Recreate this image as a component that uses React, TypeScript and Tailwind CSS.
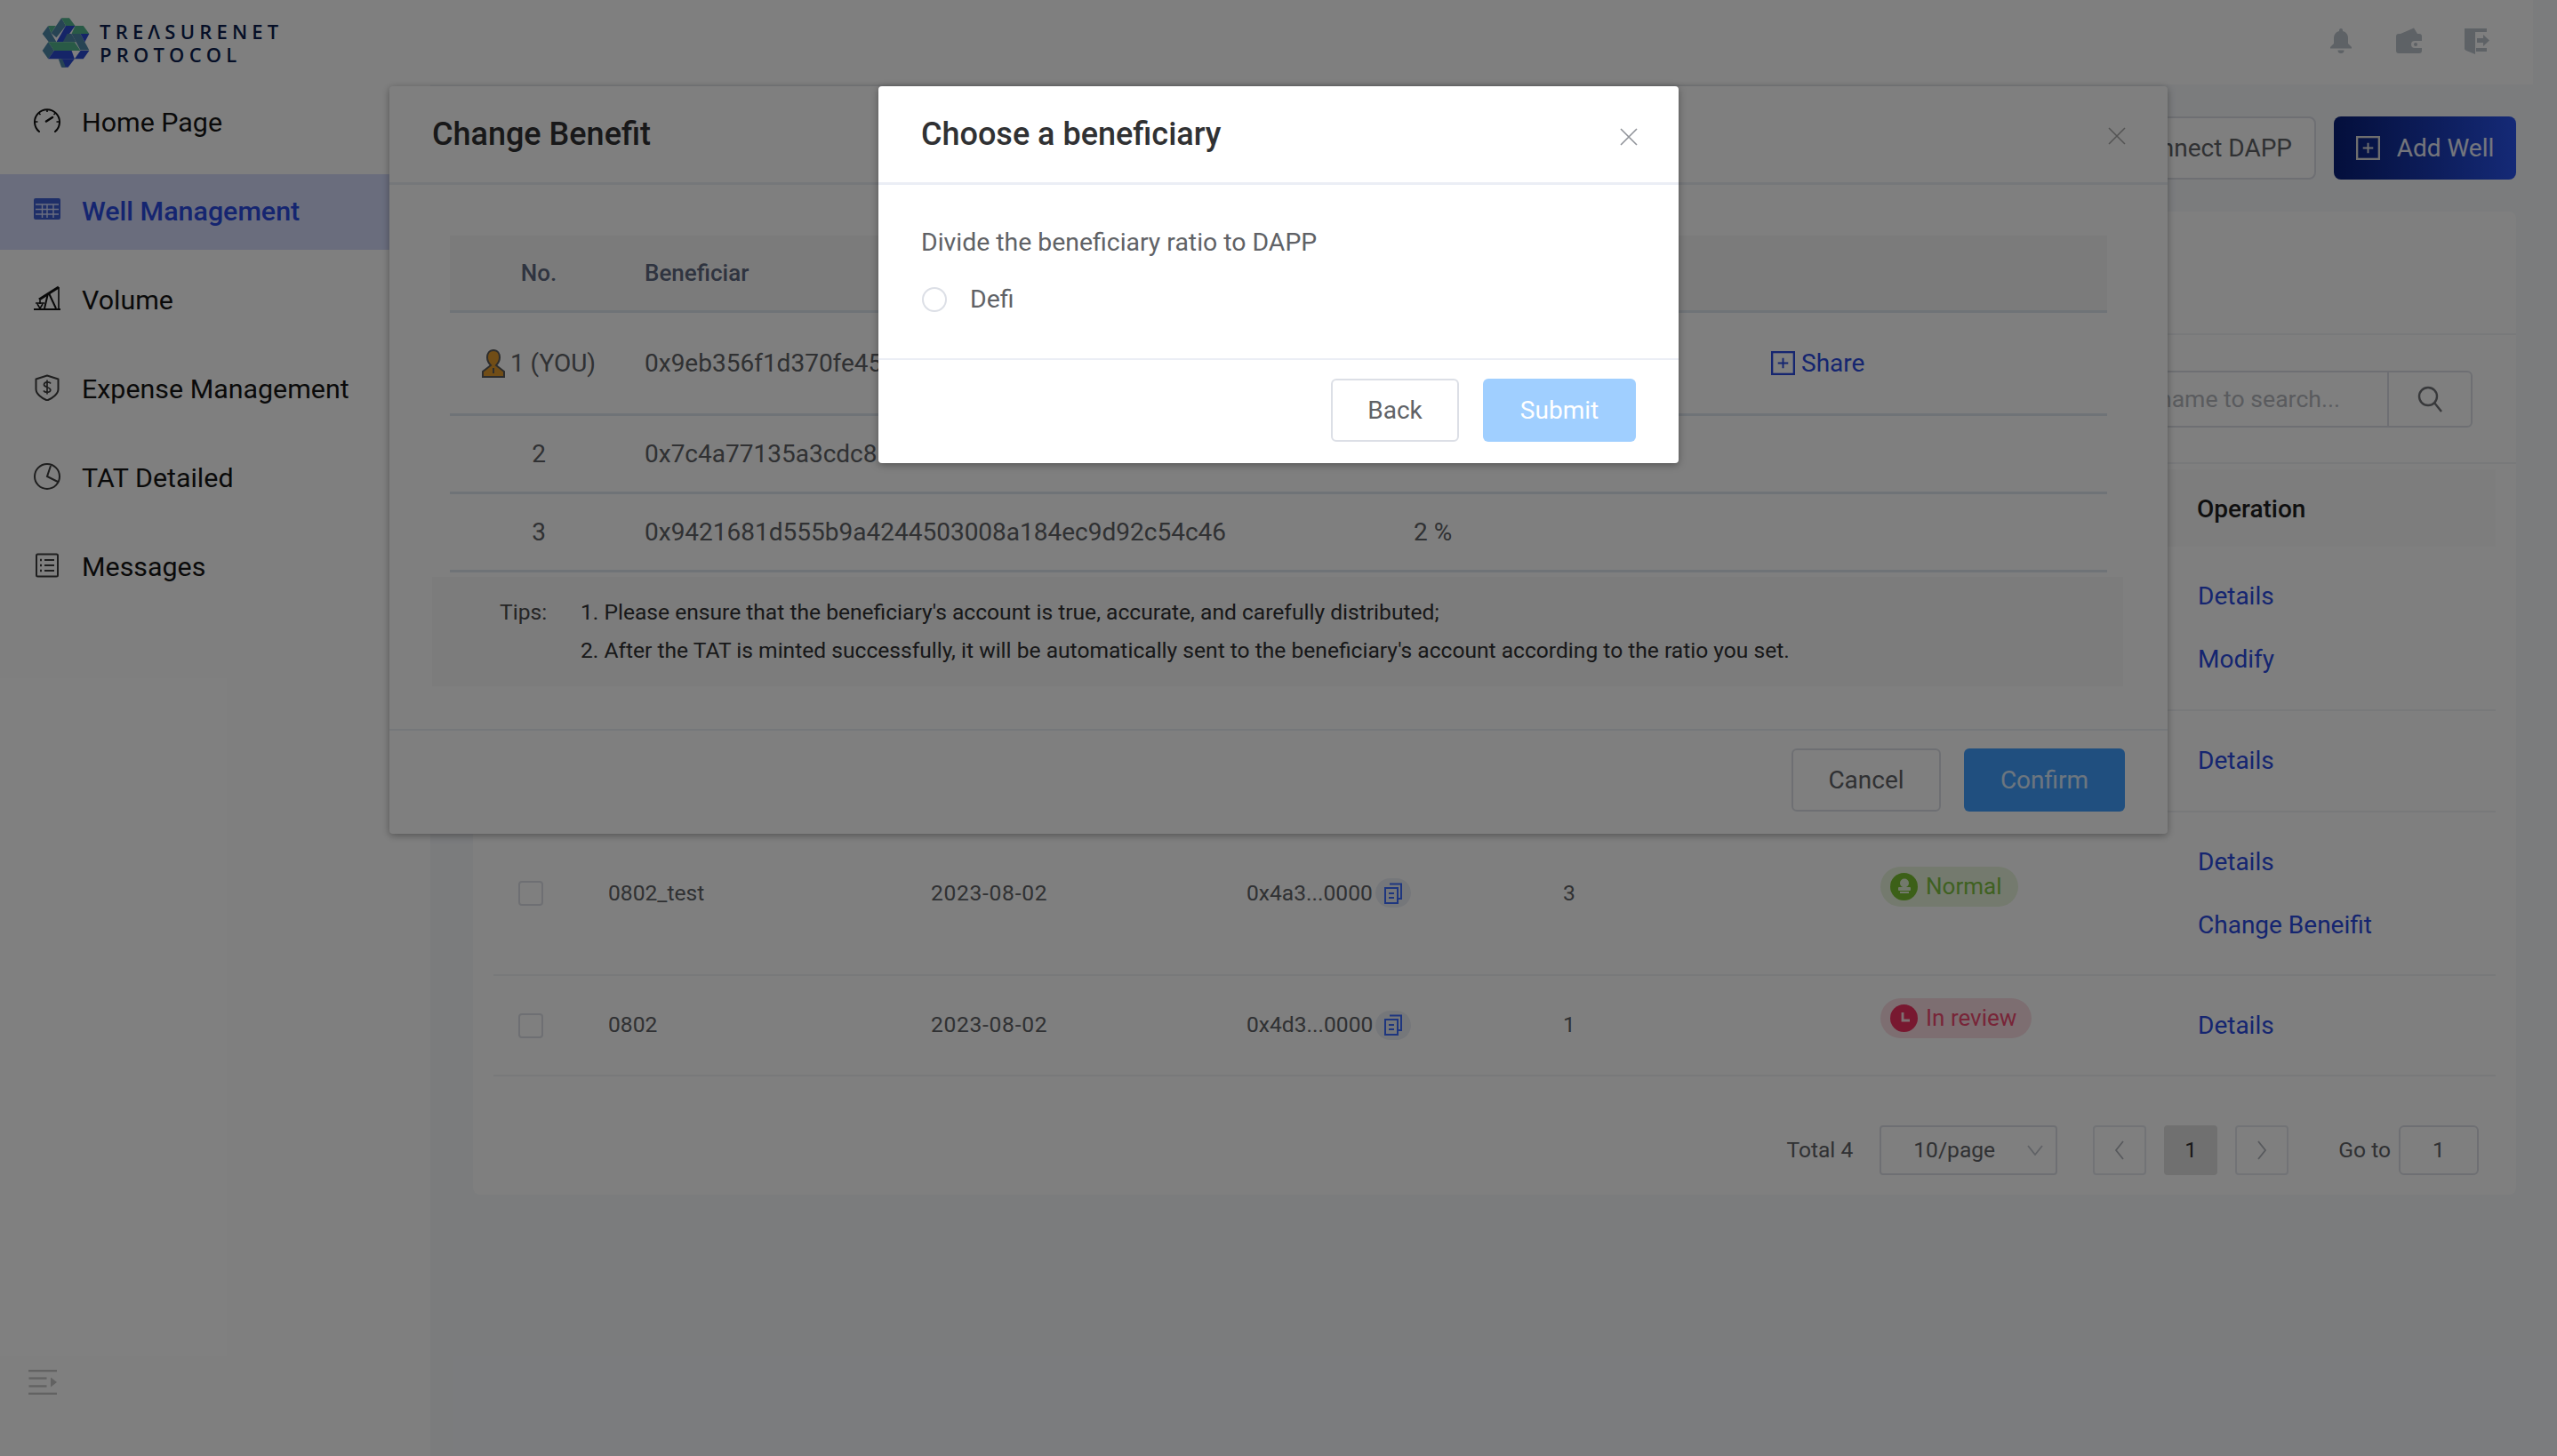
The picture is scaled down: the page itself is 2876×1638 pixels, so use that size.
import React from "react";

const Logo = () => (
  <svg viewBox="15 15 170 175" className="w-[56px] h-[58px] shrink-0">
    <polygon points="40,45 20,72 42,100 68,100 50,70" fill="#4f88a8" />
    <polygon points="40,45 66,45 50,70" fill="#52b58c" />
    <polygon points="85,18 100,45 68,85 50,70" fill="#4f88a8" />
    <polygon points="85,18 112,18 132,45 100,45" fill="#52b58c" />
    <polygon points="100,45 132,45 92,100 68,100" fill="#2b4bd0" />
    <polygon points="132,45 160,45 180,72 120,72" fill="#52b58c" />
    <polygon points="120,72 150,72 180,128 150,128" fill="#4f88a8" />
    <polygon points="105,72 120,72 135,100 90,100" fill="#4f88a8" />
    <polygon points="150,72 180,72 165,100" fill="#2b4bd0" />
    <polygon points="40,100 130,100 150,130 60,130" fill="#52b58c" />
    <polygon points="40,100 60,130 40,158 20,130" fill="#4f88a8" />
    <polygon points="60,130 120,130 130,158 40,158" fill="#2b4bd0" />
    <polygon points="85,158 130,158 108,187 88,187" fill="#2b4bd0" />
    <polygon points="75,158 88,158 100,187 85,187" fill="#4f88a8" />
    <polygon points="150,130 180,130 160,158 130,158" fill="#2b4bd0" />
  </svg>
);

const GaugeIcon = () => (
  <svg viewBox="0 0 30 30" className="w-[30px] h-[30px]" fill="none" stroke="#111" strokeWidth="2">
    <path d="M6 27 A14 14 0 1 1 24 27" strokeLinecap="round" />
    <path d="M15 2v3M5.500 6l2 2M24.500 6l-2 2M1.500 16h3M25.500 16h3" strokeWidth="1.6" />
    <path d="M14 15.500 L21 11" strokeWidth="2.6" strokeLinecap="round" />
  </svg>
);
const TableIcon = () => (
  <svg viewBox="0 0 30 30" className="w-[30px] h-[30px]">
    <rect x="0" y="2" width="30" height="24" rx="2" fill="#3f5fd0" />
    <path d="M2 9h26M2 14.500h26M2 20h26M9.500 9v15M15 9v15M22 9v15" stroke="#d4dcff" strokeWidth="1.4" />
  </svg>
);
const PumpIcon = () => (
  <svg viewBox="0 0 30 30" className="w-[30px] h-[30px]" fill="none" stroke="#111">
    <path d="M0 27h30" strokeWidth="2" />
    <path d="M6 16 L28 2" strokeWidth="3" />
    <path d="M16 9 L12 26M17 9 L25 26" strokeWidth="2" />
    <path d="M28 2 L28 26" strokeWidth="1.6" />
    <path d="M2 20h10M4 21l3 5 3-5M7 17v4" strokeWidth="1.6" />
  </svg>
);
const ShieldIcon = () => (
  <svg viewBox="0 0 30 30" className="w-[30px] h-[30px]" fill="none" stroke="#3c3c3c" strokeWidth="2">
    <path d="M15 1.500 L27.500 5.500 V17 C27.500 22 21 27 15 29.500 C9 27 2.500 22 2.500 17 V5.500 Z" strokeLinejoin="round" />
    <path d="M19 10.500 C18 8.500 12 8 11.500 11.500 C11 15 19 14 18.800 18 C18.500 21 12.500 21 11 18.500M15 6.500v16" strokeWidth="1.7" />
  </svg>
);
const PieIcon = () => (
  <svg viewBox="0 0 30 30" className="w-[30px] h-[30px]" fill="none" stroke="#3c3c3c" strokeWidth="2">
    <circle cx="15" cy="15" r="14" />
    <path d="M19 3 L15 15 L27 21" />
  </svg>
);
const ListIcon = () => (
  <svg viewBox="0 0 30 30" className="w-[30px] h-[30px]" fill="none" stroke="#3c3c3c" strokeWidth="2">
    <rect x="3" y="2.500" width="24" height="25" rx="1.500" />
    <path d="M12 9h11M12 15h11M12 21h11" />
    <path d="M7 9h2M7 15h2M7 21h2" strokeWidth="2.6" />
  </svg>
);

const nav = [
  { label: "Home Page", icon: <GaugeIcon /> },
  { label: "Well Management", icon: <TableIcon />, active: true },
  { label: "Volume", icon: <PumpIcon /> },
  { label: "Expense Management", icon: <ShieldIcon /> },
  { label: "TAT Detailed", icon: <PieIcon /> },
  { label: "Messages", icon: <ListIcon /> },
];

const Cross = ({ color = "#909399" }: { color?: string }) => (
  <svg viewBox="0 0 20 20" className="w-[20px] h-[20px]" fill="none" stroke={color} strokeWidth="1.6">
    <path d="M1 1 L19 19 M19 1 L1 19" />
  </svg>
);

const PlusBox = ({ color, size }: { color: string; size: string }) => (
  <svg viewBox="0 0 28 28" className={size} fill="none" stroke={color} strokeWidth="2.4">
    <rect x="1.200" y="1.200" width="25.600" height="25.600" />
    <path d="M14 8v12M8 14h12" strokeWidth="2" />
  </svg>
);

const Copy = () => (
  <span className="ml-[3px] w-[40px] h-[33px] rounded-full bg-[#ebeef5] flex items-center justify-center">
    <svg viewBox="0 0 22 24" className="w-[22px] h-[24px]" fill="none" stroke="#3c6cff" strokeWidth="2">
      <path d="M7 1.500 H20 V18 H17" />
      <rect x="2" y="6" width="14" height="17" />
      <path d="M6 12h6M6 17h6" />
    </svg>
  </span>
);

const Checkbox = () => (
  <span className="block w-[28px] h-[28px] border-2 border-[#dcdfe6] rounded-[4px] bg-white ml-[28px]" />
);

const Link = ({ children }: { children: React.ReactNode }) => (
  <a className="h-[71px] flex items-center text-[28px] text-[#2a4ae0]">{children}</a>
);

const rowGrid = "grid grid-cols-[129px_363px_355px_356px_357px_357px_335px] items-center border-b-2 border-[#f0f2f5]";

const benefitGrid = "grid grid-cols-[200px_864px_402px_398px] items-center border-b-[3px] border-[#dfe6ee]";

export default function App() {
  return (
    <div className="relative w-[2876px] h-[1638px] overflow-hidden bg-[#f6f8fb] font-['Roboto',sans-serif] text-[#606266]">
      {/* Header */}
      <header className="w-[2849px] h-[95px] bg-white flex items-center pl-[46px] pr-[49px]">
        <Logo />
        <div className="ml-[10px] font-['Open_Sans',sans-serif] font-semibold text-[#0c1f4f] text-[22px] leading-[26px] tracking-[5.2px]">
          <div>TREΛSURENET</div>
          <div>PROTOCOL</div>
        </div>
        <div className="ml-auto -mt-[3px] flex items-center">
          <svg viewBox="0 0 24 28" className="w-[24px] h-[28px]" fill="#bcc4cc">
            <path d="M12 0a2 2 0 0 1 2 2v1c4 1 6 4 6 8v6l4 4v1.500H0V21l4-4v-6c0-4 2-7 6-8V2a2 2 0 0 1 2-2zM8.500 24.500h7a3.500 3.500 0 0 1-7 0z" />
          </svg>
          <svg viewBox="0 0 30 30" className="ml-[50px] w-[30px] h-[30px]" fill="#bcc4cc">
            <path d="M5 7 L20 0.500 L24 7z" />
            <path d="M3 7h23a3 3 0 0 1 3 3v5h-8a4 4 0 0 0 0 8h8v3a3 3 0 0 1-3 3H3a3 3 0 0 1-3-3V10a3 3 0 0 1 3-3z" />
            <circle cx="22" cy="19" r="2" />
          </svg>
          <svg viewBox="0 0 28 30" className="ml-[47px] w-[28px] h-[30px]" fill="#bcc4cc">
            <path d="M0 1H25V5H12V30L2 26Q0 25 0 24z" />
            <path d="M13 23H25V27H13z" />
            <path d="M14 12H21V8L28 14.500L21 21V17H14z" />
          </svg>
        </div>
      </header>

      <div className="flex h-[1543px]">
        {/* Sidebar */}
        <aside className="w-[484px] shrink-0 bg-white flex flex-col">
          <nav className="flex flex-col -mt-[7px]">
            {nav.map((n) => (
              <div key={n.label} className="h-[100px] flex items-center">
                <div
                  className={`w-full h-[85px] pl-[38px] flex items-center gap-[24px] text-[30.400px] ${
                    n.active ? "bg-[#d4dbfb] font-medium text-[#2a4ae0]" : "text-[#141414]"
                  }`}
                >
                  <span className="w-[30px] h-[30px] -mt-[4px] shrink-0">{n.icon}</span>
                  <span>{n.label}</span>
                </div>
              </div>
            ))}
          </nav>
          <div className="mt-auto pl-[32px] pb-[69px]">
            <svg viewBox="0 0 32 30" className="w-[32px] h-[28px]" fill="#c4c4c4" preserveAspectRatio="none">
              <rect x="0" y="0" width="32" height="2.500" />
              <rect x="0.500" y="9" width="20" height="2.500" />
              <rect x="0.500" y="18.500" width="20" height="2.500" />
              <rect x="0" y="27.500" width="32" height="2.500" />
              <polygon points="25,9 32,15 25,21" />
            </svg>
          </div>
        </aside>

        {/* Main */}
        <main className="flex-1 pl-[48px] pr-[46px] pt-[36px]">
          <div className="flex justify-end gap-[20px] h-[71px] text-[28px]">
            <button className="w-[340px] h-[71px] bg-white border-2 border-[#dcdfe6] rounded-[8px] text-[#606266] text-right pr-[25px]">
              Connect DAPP
            </button>
            <button className="w-[205px] h-[71px] rounded-[8px] bg-gradient-to-r from-[#081e78] to-[#2a54ee] text-white/90 flex items-center justify-center gap-[19px]">
              <PlusBox color="#dcdcdc" size="w-[27px] h-[29px]" />
              <span>Add Well</span>
            </button>
          </div>

          <section className="mt-[36px] h-[1106px] bg-white rounded-[8px]">
            <div className="h-[139px] border-b-2 border-[#f0f2f5]" />
            <div className="h-[145px] border-b-2 border-[#f0f2f5] flex items-center justify-end pr-[49px]">
              <div className="w-[500px] h-[64px] border-2 border-[#dcdfe6] rounded-[6px] flex">
                <div className="flex-1 flex items-center justify-end pr-[53px] text-[#b4b7bd] text-[26.600px] overflow-hidden whitespace-nowrap">Enter well name to search...</div>
                <div className="w-[94px] border-l-2 border-[#dcdfe6] flex items-center justify-center">
                  <svg viewBox="0 0 28 30" className="w-[28px] h-[30px]" fill="none" stroke="#707277" strokeWidth="2.400">
                    <circle cx="12" cy="12" r="10" />
                    <path d="M19 19 L27 29" />
                  </svg>
                </div>
              </div>
            </div>

            <div className="mx-[23px] mt-[6px]">
              <div className="grid grid-cols-[129px_363px_355px_356px_357px_357px_335px] items-center h-[87px] bg-[#fafafa] text-[#1f1f1f] font-medium text-[28px]">
                <span className="col-start-7 -ml-[1px] mt-[2px]">Operation</span>
              </div>

              <div className={`${rowGrid} h-[185px] text-[24.600px]`}>
                <div className="col-start-7 flex flex-col">
                  <Link>Details</Link>
                  <Link>Modify</Link>
                </div>
              </div>
              <div className={`${rowGrid} h-[114px] text-[24.600px]`}>
                <div className="col-start-7 flex flex-col">
                  <Link>Details</Link>
                </div>
              </div>
              <div className={`${rowGrid} h-[184px] text-[24.600px]`}>
                <Checkbox />
                <span>0802_test</span>
                <span className="tracking-[0.7px]">2023-08-02</span>
                <span className="flex items-center">0x4a3...0000<Copy /></span>
                <span>3</span>
                <span className="mb-[16px] w-[155px] h-[45px] rounded-full bg-[#e8f5dc] text-[#7ec242] text-[26px] flex items-center pl-[11px] gap-[9px]">
                  <span className="w-[31px] h-[31px] rounded-full bg-[#78c030] flex items-center justify-center">
                    <svg viewBox="0 0 20 20" className="w-[20px] h-[20px]" fill="#e4f2d8">
                      <circle cx="10" cy="6.500" r="5" />
                      <rect x="3" y="11" width="14" height="4" rx="1" />
                      <rect x="5" y="16" width="10" height="2" />
                    </svg>
                  </span>
                  Normal
                </span>
                <div className="flex flex-col">
                  <Link>Details</Link>
                  <Link>Change Beneifit</Link>
                </div>
              </div>
              <div className={`${rowGrid} h-[113px] text-[24.600px]`}>
                <Checkbox />
                <span>0802</span>
                <span className="tracking-[0.7px]">2023-08-02</span>
                <span className="flex items-center">0x4d3...0000<Copy /></span>
                <span>1</span>
                <span className="mb-[16px] w-[170px] h-[45px] rounded-full bg-[#fadde3] text-[#f04a70] text-[26px] flex items-center pl-[11px] gap-[9px]">
                  <span className="w-[31px] h-[31px] rounded-full bg-[#f03060] flex items-center justify-center">
                    <svg viewBox="0 0 20 20" className="w-[20px] h-[20px]" fill="none" stroke="#fbe0e5" strokeWidth="2.800">
                      <path d="M8 3v9h8" />
                    </svg>
                  </span>
                  In review
                </span>
                <div>
                  <Link>Details</Link>
                </div>
              </div>
            </div>

            <div className="mt-[55px] pr-[42px] flex justify-end items-center text-[24.600px] h-[56px]">
              <span>Total 4</span>
              <div className="ml-[30px] w-[200px] h-[56px] border-2 border-[#dcdfe6] rounded-[4px] flex items-center pl-[36px] pr-[14px] justify-between">
                <span>10/page</span>
                <svg viewBox="0 0 18 12" className="w-[18px] h-[12px]" fill="none" stroke="#c0c4cc" strokeWidth="1.800">
                  <path d="M1 1 L9 11 L17 1" />
                </svg>
              </div>
              <div className="ml-[40px] w-[60px] h-[56px] border-2 border-[#e4e7ed] rounded-[4px] flex items-center justify-center">
                <svg viewBox="0 0 12 22" className="w-[12px] h-[22px]" fill="none" stroke="#b0b4bb" strokeWidth="1.800">
                  <path d="M10 1 L2 11 L10 21" />
                </svg>
              </div>
              <div className="ml-[20px] w-[60px] h-[56px] bg-[#e0e0e0] rounded-[4px] flex items-center justify-center text-[#303133]">1</div>
              <div className="ml-[20px] w-[60px] h-[56px] border-2 border-[#e4e7ed] rounded-[4px] flex items-center justify-center">
                <svg viewBox="0 0 12 22" className="w-[12px] h-[22px]" fill="none" stroke="#b0b4bb" strokeWidth="1.800">
                  <path d="M2 1 L10 11 L2 21" />
                </svg>
              </div>
              <span className="ml-[56px]">Go to</span>
              <div className="ml-[9px] w-[90px] h-[56px] border-2 border-[#dcdfe6] rounded-[6px] flex items-center justify-center">1</div>
            </div>
          </section>
        </main>
      </div>

      {/* Change Benefit dialog */}
      <div className="absolute left-[438px] top-[97px] w-[2000px] h-[841px] bg-white rounded-[4px] shadow-[0_2px_8px_rgba(0,0,0,0.35)] flex flex-col">
        <div className="h-[111px] shrink-0 border-b-[3px] border-[#ebeef5] flex items-center justify-between pl-[48px] pr-[48px]">
          <span className="text-[36px] font-medium text-[#303133]">Change Benefit</span>
          <span className="mt-[3px] mr-[-1px]"><Cross color="#a8a8a8" /></span>
        </div>
        <div className="ml-[68px] w-[1864px] mt-[57px] text-[28px]">
          <div className={`${benefitGrid} h-[87px] bg-[#f7f7f7] font-medium text-[#5e6880] text-[26px]`}>
            <span className="text-center">No.</span>
            <span className="pl-[19px]">Beneficiar</span>
          </div>
          <div className={`${benefitGrid} h-[116px]`}>
            <span className="flex items-center justify-center gap-[6px]">
              <svg viewBox="0 0 26 34" className="w-[26px] h-[34px]">
                <path d="M13 2c5 0 7 4 7 8s-2 7-4 9l9 7v6H1v-6l9-7c-2-2-4-5-4-9s2-8 7-8z" fill="#e29a2c" stroke="#5a5a5a" strokeWidth="2" />
                <path d="M13 22v6" stroke="#5a5a5a" strokeWidth="2" />
              </svg>
              1 (YOU)
            </span>
            <span className="pl-[19px]">0x9eb356f1d370fe45</span>
            <span />
            <span className="pl-[20px] flex items-center gap-[7px] text-[#2a4ae0]">
              <PlusBox color="#2a4ae0" size="w-[27px] h-[27px]" />
              Share
            </span>
          </div>
          <div className={`${benefitGrid} h-[88px]`}>
            <span className="text-center">2</span>
            <span className="pl-[19px]">0x7c4a77135a3cdc8</span>
          </div>
          <div className={`${benefitGrid} h-[88px]`}>
            <span className="text-center">3</span>
            <span className="pl-[19px]">0x9421681d555b9a4244503008a184ec9d92c54c46</span>
            <span className="pl-[20px]">2 %</span>
          </div>
        </div>
        <div className="ml-[48px] mt-[5px] w-[1902px] h-[123px] bg-[#f8f8f8] flex pt-[18px] text-[24.600px] leading-[43px] text-[#303133]">
          <span className="ml-[76px] w-[91px] shrink-0 text-[#4a4a4a]">Tips:</span>
          <div>
            <div>1. Please ensure that the beneficiary's account is true, accurate, and carefully distributed;</div>
            <div>2. After the TAT is minted successfully, it will be automatically sent to the beneficiary's account according to the ratio you set.</div>
          </div>
        </div>
        <div className="mt-auto h-[118px] border-t-2 border-[#ebeef5] flex justify-end items-start gap-[26px] pt-[20px] pr-[48px] text-[28px]">
          <button className="w-[168px] h-[71px] border-2 border-[#dcdfe6] rounded-[6px] text-[#606266]">Cancel</button>
          <button className="w-[181px] h-[71px] bg-[#409eff] rounded-[6px] text-white/80">Confirm</button>
        </div>
      </div>

      {/* Mask */}
      <div className="absolute inset-0 bg-black/50" />

      {/* Choose a beneficiary dialog */}
      <div className="absolute left-[988px] top-[97px] w-[900px] h-[424px] bg-white rounded-[4px] shadow-[0_2px_8px_rgba(0,0,0,0.35)] flex flex-col">
        <div className="h-[111px] shrink-0 border-b-[3px] border-[#ebeef5] flex items-center justify-between pl-[48px] pr-[46px]">
          <span className="text-[36px] font-medium text-[#303133]">Choose a beneficiary</span>
          <span className="mt-[6px]"><Cross /></span>
        </div>
        <div className="h-[197px] border-b-2 border-[#ebeef5] pl-[48px] pt-[46px] text-[28.400px] text-[#606266]">
          <div className="leading-[38px]">Divide the beneficiary ratio to DAPP</div>
          <div className="mt-[26px] flex items-center gap-[26px] h-[38px]">
            <span className="ml-[1px] w-[28px] h-[28px] rounded-full border-2 border-[#dcdfe6] bg-white" />
            <span>Defi</span>
          </div>
        </div>
        <div className="flex justify-end gap-[27px] pt-[21px] pr-[48px] text-[28px]">
          <button className="w-[144px] h-[71px] border-2 border-[#dcdfe6] rounded-[6px] text-[#606266] bg-white">Back</button>
          <button className="w-[172px] h-[71px] bg-[#a0cfff] rounded-[6px] text-white">Submit</button>
        </div>
      </div>
    </div>
  );
}
